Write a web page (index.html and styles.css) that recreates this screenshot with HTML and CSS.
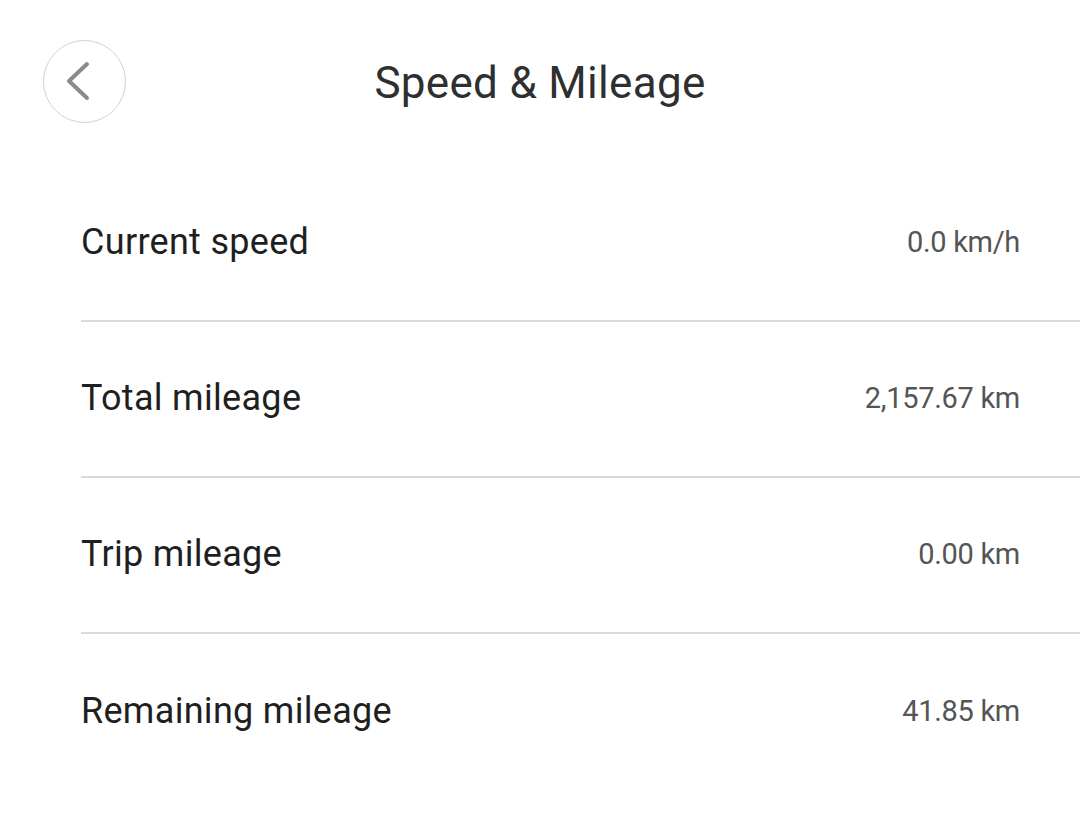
FILE: index.html
```html
<!DOCTYPE html>
<html>
<head>
<meta charset="utf-8">
<link rel="stylesheet" href="styles.css">
</head>
<body>
<div class="page">
  <header class="header">
    <button class="back" aria-label="Back">
      <svg width="40" height="40" viewBox="0 0 40 40"><path d="M24 3 L6 20 L24 37" fill="none" stroke="#8a8a8a" stroke-width="4" stroke-linecap="round" stroke-linejoin="round"/></svg>
    </button>
    <h1 class="title">Speed &amp; Mileage</h1>
  </header>
  <ul class="list">
    <li class="row"><span class="label">Current speed</span><span class="value">0.0 km/h</span></li>
    <li class="row"><span class="label">Total mileage</span><span class="value">2,157.67 km</span></li>
    <li class="row"><span class="label">Trip mileage</span><span class="value">0.00 km</span></li>
    <li class="row last"><span class="label">Remaining mileage</span><span class="value">41.85 km</span></li>
  </ul>
</div>
</body>
</html>
```

FILE: styles.css
```css
* { box-sizing: border-box; }
html, body { margin: 0; padding: 0; background: #fff; }
body { font-family: Roboto, "Noto Sans", sans-serif; color: #222; }
.page { width: 1080px; height: 829px; overflow: hidden; }
.header {
  position: relative;
  height: 166px;
  display: flex;
  justify-content: center;
  padding-top: 55px;
}
.back {
  position: absolute;
  left: 43px;
  top: 40px;
  width: 83px;
  height: 83px;
  border-radius: 50%;
  border: 1.5px solid #d2d2d2;
  background: #fff;
  padding: 0;
  display: flex;
  align-items: center;
  justify-content: center;
}
.back svg { margin-left: -4px; margin-top: -2px; }
.title {
  margin: 0;
  font-size: 44px;
  font-weight: 400;
  color: #2f2f2f;
  line-height: 56px;
  letter-spacing: 0.3px;
}
.list { list-style: none; margin: 0; padding: 0 0 0 81px; }
.row {
  height: 156px;
  display: flex;
  align-items: center;
  justify-content: space-between;
  padding-right: 60px;
  border-bottom: 2px solid #dadada;
  padding-bottom: 2px;
}
.row.last { border-bottom: none; }
.label { font-size: 36px; color: #1f1f1f; letter-spacing: 0.3px; }
.value { font-size: 29px; color: #555; letter-spacing: -0.3px; }
```
